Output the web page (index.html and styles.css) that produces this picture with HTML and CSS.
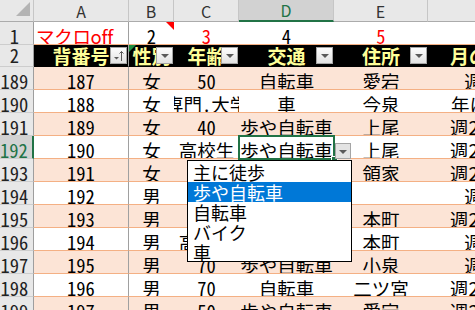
FILE: index.html
```html
<!DOCTYPE html>
<html lang="ja">
<head>
    <meta charset="UTF-8">
    <meta name="viewport" content="width=device-width, initial-scale=1.0">
    <title>名簿シート</title>
    <link rel="stylesheet" href="styles.css">
</head>
<body>
    <div class="sheet">
        <div class="row colhead">
            <div class="rh corner"><span class="corner-tri"></span></div>
            <div class="ca">A</div>
            <div class="cb">B</div>
            <div class="cc">C</div>
            <div class="cd sel">D</div>
            <div class="ce">E</div>
            <div class="cf">F</div>
        </div>
        <div class="row r1">
            <div class="rh">1</div>
            <div class="ca left red macro">マクロoff</div>
            <div class="cb n comment">2</div>
            <div class="cc n red">3</div>
            <div class="cd n">4</div>
            <div class="ce n red">5</div>
            <div class="cf n">6</div>
        </div>
        <div class="row r2">
            <div class="rh">2</div>
            <div class="ca">背番号<span class="filter sorted"><svg width="15" height="15" viewBox="0 0 15 15"><path d="M3 9h5l-2.5 2.5z" fill="#5a5a5a"/><path d="M10.5 13V3.5M8.5 5.5l2-2 2 2" stroke="#5a5a5a" stroke-width="1" fill="none"/></svg></span></div>
            <div class="cb flag">性別<span class="filter"></span></div>
            <div class="cc">年齢<span class="filter"></span></div>
            <div class="cd">交通<span class="filter"></span></div>
            <div class="ce">住所<span class="filter"></span></div>
            <div class="cf">月の回数<span class="filter"></span></div>
        </div>

        <div class="row peach">
            <div class="rh">189</div>
            <div class="ca n">187</div>
            <div class="cb">女</div>
            <div class="cc n">50</div>
            <div class="cd">自転車</div>
            <div class="ce">愛宕</div>
            <div class="cf">週1回</div>
        </div>
        <div class="row">
            <div class="rh">190</div>
            <div class="ca n">188</div>
            <div class="cb">女</div>
            <div class="cc n">専門.大学</div>
            <div class="cd">車</div>
            <div class="ce">今泉</div>
            <div class="cf">年に数回</div>
        </div>
        <div class="row peach">
            <div class="rh">191</div>
            <div class="ca n">189</div>
            <div class="cb">女</div>
            <div class="cc n">40</div>
            <div class="cd">歩や自転車</div>
            <div class="ce">上尾</div>
            <div class="cf">週2～3回</div>
        </div>
        <div class="row">
            <div class="rh sel">192</div>
            <div class="ca n">190</div>
            <div class="cb">女</div>
            <div class="cc">高校生</div>
            <div class="cd">歩や自転車</div>
            <div class="ce">上尾</div>
            <div class="cf">週2～3回</div>
        </div>
        <div class="row peach">
            <div class="rh">193</div>
            <div class="ca n">191</div>
            <div class="cb">女</div>
            <div class="cc n">40</div>
            <div class="cd">自転車</div>
            <div class="ce">領家</div>
            <div class="cf">週2～3回</div>
        </div>
        <div class="row">
            <div class="rh">194</div>
            <div class="ca n">192</div>
            <div class="cb">男</div>
            <div class="cc n">60</div>
            <div class="cd">車</div>
            <div class="ce"></div>
            <div class="cf">週1回</div>
        </div>
        <div class="row peach">
            <div class="rh">195</div>
            <div class="ca n">193</div>
            <div class="cb">男</div>
            <div class="cc n">50</div>
            <div class="cd">自転車</div>
            <div class="ce">本町</div>
            <div class="cf">週2～3回</div>
        </div>
        <div class="row">
            <div class="rh">196</div>
            <div class="ca n">194</div>
            <div class="cb">男</div>
            <div class="cc">高校生</div>
            <div class="cd">歩や自転車</div>
            <div class="ce">本町</div>
            <div class="cf">週1回</div>
        </div>
        <div class="row peach">
            <div class="rh">197</div>
            <div class="ca n">195</div>
            <div class="cb">男</div>
            <div class="cc n">70</div>
            <div class="cd">歩や自転車</div>
            <div class="ce">小泉</div>
            <div class="cf">週1回</div>
        </div>
        <div class="row">
            <div class="rh">198</div>
            <div class="ca n">196</div>
            <div class="cb">男</div>
            <div class="cc n">70</div>
            <div class="cd">自転車</div>
            <div class="ce">二ツ宮</div>
            <div class="cf">週2～3回</div>
        </div>
        <div class="row peach">
            <div class="rh">199</div>
            <div class="ca n">197</div>
            <div class="cb">男</div>
            <div class="cc n">50</div>
            <div class="cd">歩や自転車</div>
            <div class="ce">愛宕</div>
            <div class="cf">週2～3回</div>
        </div>

        <!-- selected cell D192 with its validation list -->
        <div class="selbox"></div>
        <div class="handle"></div>
        <div class="dv-btn"></div>
        <ul class="dv-list">
            <li>主に徒歩</li>
            <li class="on">歩や自転車</li>
            <li>自転車</li>
            <li>バイク</li>
            <li>車</li>
        </ul>
    </div>
</body>
</html>
```

FILE: styles.css
```css
body {
    margin: 0;
    background-color: #ffffff;
}
.sheet {
    position: relative;
    width: 475px;
    height: 310px;
    overflow: hidden;
    font-family: "Noto Sans CJK JP", "Noto Sans", sans-serif;
    font-size: 18.5px;
    color: #000000;
    background-color: #ffffff;
}
.row {
    display: flex;
    height: 23px;
}
.row > div {
    flex: none;
    box-sizing: border-box;
    display: flex;
    align-items: flex-end;
    justify-content: center;
    overflow: hidden;
    white-space: nowrap;
    line-height: 16px;
    position: relative;
    border-bottom: 1px solid #F4B084;
}
.row > .rh {
    width: 34px;
    padding-right: 4px;
    background-color: #E8E8E8;
    color: #222222;
    border-right: 1px solid #9E9E9E;
    border-bottom-color: #CDCDCD;
    font-weight: normal;
    font-size: 18.5px;
    font-feature-settings: "hwid";
}
.ca { width: 95px; border-right: 1px solid #A0A0A0; }
.cb { width: 45px; }
.cc { width: 65px; }
.cd { width: 95px; }
.ce { width: 94px; }
.cf { width: 120px; }

/* column letters */
.colhead {
    height: 22px;
}
.row.colhead > div {
    background-color: #E8E8E8;
    border-right: 1px solid #C6C6C6;
    border-bottom: 1px solid #ABABAB;
    font-size: 16px;
    line-height: 1;
    color: #333333;
    align-items: center;
}
.row.colhead > .sel {
    background-color: #D2D2D2;
    color: #217346;
    border-bottom: 2px solid #217346;
}
.row > .corner {
    justify-content: flex-end;
    align-items: flex-end;
    padding: 0 3px 3px 0;
}
.corner-tri {
    width: 0;
    height: 0;
    border-left: 14px solid transparent;
    border-bottom: 14px solid #B4B4B4;
}

.left {
    justify-content: flex-start !important;
    padding-left: 2px;
}
.macro { letter-spacing: -0.3px; }
.red { color: #FF0000; }
.n { font-feature-settings: "hwid"; }
.comment::after {
    content: "";
    position: absolute;
    top: 0;
    right: 0;
    border-top: 8px solid #FF0000;
    border-left: 8px solid transparent;
}

/* table header */
.r2 {
    height: 22px;
}
.row.r2 > div {
    background-color: #000000;
    color: #FFFF99;
    font-weight: bold;
    font-size: 19px;
    line-height: 1;
    align-items: center;
    border-bottom-color: #000000;
}
.row.r2 > .rh {
    background-color: #E8E8E8;
    color: #222222;
    font-weight: normal;
    font-size: 18.5px;
    border-bottom-color: #CDCDCD;
}
.flag::before {
    content: "";
    position: absolute;
    top: 0;
    left: 0;
    border-top: 7px solid #1E8E3E;
    border-right: 7px solid transparent;
}
.filter {
    position: absolute;
    right: 1px;
    top: 2px;
    width: 17px;
    height: 17px;
    box-sizing: border-box;
    border: 1px solid #A5A5A5;
    background: linear-gradient(#FDFDFD, #E2E2E2);
    display: flex;
    align-items: center;
    justify-content: center;
}
.filter::after {
    content: "";
    margin-top: 1px;
    border-top: 4px solid #5A5A5A;
    border-left: 4px solid transparent;
    border-right: 4px solid transparent;
}
.filter.sorted::after {
    display: none;
}

/* data rows */
.peach > div {
    background-color: #FCE4D6;
}
.row > .rh.sel {
    background-color: #D2D2D2;
    color: #217346;
    border-right: 2px solid #217346;
}

/* selection + data validation list */
.selbox {
    position: absolute;
    left: 238px;
    top: 135px;
    width: 97px;
    height: 25px;
    box-sizing: border-box;
    border: 2px solid #217346;
}
.handle {
    position: absolute;
    left: 331px;
    top: 156px;
    width: 5px;
    height: 5px;
    background-color: #217346;
    border: 1px solid #ffffff;
}
.dv-btn {
    position: absolute;
    left: 335px;
    top: 143px;
    width: 16px;
    height: 16px;
    box-sizing: border-box;
    border: 1px solid #A5A5A5;
    background-color: #E3E3E3;
    display: flex;
    align-items: center;
    justify-content: center;
}
.dv-btn::after {
    content: "";
    margin-top: 1px;
    border-top: 4px solid #5A5A5A;
    border-left: 4px solid transparent;
    border-right: 4px solid transparent;
}
.dv-list {
    position: absolute;
    left: 187px;
    top: 160px;
    width: 165px;
    height: 102px;
    box-sizing: border-box;
    margin: 0;
    padding: 1px 0 0;
    list-style: none;
    background-color: #ffffff;
    border: 1px solid #000000;
    font-size: 18px;
}
.dv-list li {
    height: 20px;
    line-height: 20px;
    padding-left: 5px;
}
.dv-list .on {
    background-color: #0078D7;
    color: #ffffff;
}
```
